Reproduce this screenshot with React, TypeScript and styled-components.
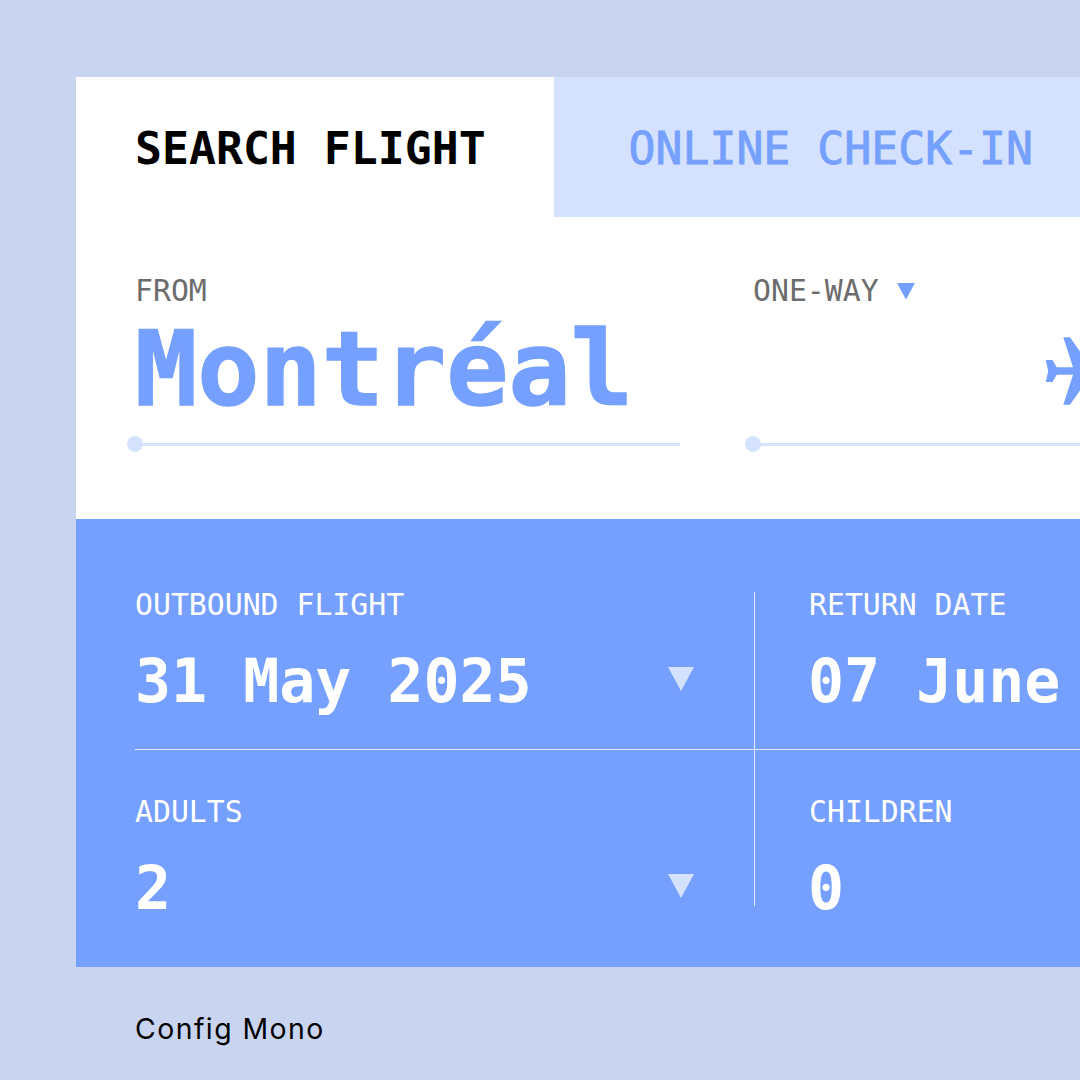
import React from "react";
import styled, { createGlobalStyle } from "styled-components";

const MONO = `"DejaVu Sans Mono", "Liberation Mono", monospace`;
const BLUE = "#76a0ff";
const PALE = "#d5e2ff";

const Global = createGlobalStyle`
  html, body { margin: 0; padding: 0; background: #c9d5f0; }
  #root { width: 1080px; height: 1080px; overflow: hidden; }
`;

const Page = styled.div`
  width: 1080px;
  height: 1080px;
  overflow: hidden;
  background: #c9d5f0;
  padding: 77px 0 0 76px;
  box-sizing: border-box;
`;
const Card = styled.div`
  width: 1004px;
  display: flex;
  flex-direction: column;
`;
const Tabs = styled.div`
  display: flex;
  height: 140px;
`;
const Tab = styled.div<{ $active?: boolean }>`
  width: ${(p) => (p.$active ? "478px" : "526px")};
  box-sizing: border-box;
  display: flex;
  align-items: center;
  padding: 3px 0 0 ${(p) => (p.$active ? "59px" : "74.5px")};
  background: ${(p) => (p.$active ? "#fff" : PALE)};
  color: ${(p) => (p.$active ? "#000" : BLUE)};
  font: ${(p) => (p.$active ? 700 : 400)} 44.8px/60px ${MONO};
  -webkit-text-stroke: ${(p) => (p.$active ? "0" : "0.9px")};
  white-space: nowrap;
`;
const Route = styled.div`
  height: 302px;
  background: #fff;
  box-sizing: border-box;
  padding: 56px 0 0 60px;
  display: flex;
  gap: 74px;
`;
const Field = styled.div<{ $wide?: boolean }>`
  width: ${(p) => (p.$wide ? "400px" : "544px")};
  flex: none;
`;
const SmallLabel = styled.div`
  display: flex;
  align-items: center;
  gap: 18px;
  margin-left: -1px;
  font: 400 29.8px/36px ${MONO};
  color: #6c6c6c;
  white-space: nowrap;
`;
const City = styled.div`
  height: 92px;
  margin: 14px 0 0 -1px;
  font: 700 103.4px/92px ${MONO};
  -webkit-text-stroke: 1.5px ${BLUE};
  color: ${BLUE};
  white-space: nowrap;
`;
const PlaneSlot = styled.div`
  height: 92px;
  margin-top: 14px;
  padding: 4px 0 0 291px;
  box-sizing: border-box;
  display: flex;
  align-items: center;
`;
const Track = styled.div`
  position: relative;
  margin-top: 28px;
  height: 3px;
  background: ${PALE};
  &::before {
    content: "";
    position: absolute;
    left: -9px;
    top: -7px;
    width: 16px;
    height: 16px;
    border-radius: 50%;
    background: ${PALE};
  }
`;
const Details = styled.div`
  height: 448px;
  background: ${BLUE};
  box-sizing: border-box;
  padding: 73px 0 0 59px;
  display: grid;
  grid-template-columns: 619px 1fr;
  grid-template-rows: 158px 156px;
`;
const Cell = styled.div<{ $right?: boolean; $top?: boolean }>`
  box-sizing: border-box;
  color: #fff;
  padding-left: ${(p) => (p.$right ? "54px" : "0")};
  padding-top: ${(p) => (p.$top ? "0" : "49px")};
  border-left: ${(p) => (p.$right ? "1px solid #e4ecff" : "none")};
  border-bottom: ${(p) => (p.$top ? "1px solid #e4ecff" : "none")};
`;
const CellLabel = styled.div`
  font: 400 29.8px/26px ${MONO};
  white-space: nowrap;
`;
const ValueRow = styled.div`
  display: flex;
  align-items: center;
  justify-content: space-between;
  margin-top: 45px;
  padding-right: 60px;
  height: 36px;
`;
const Value = styled.div<{ $inset?: boolean }>`
  font: 700 59.9px/36px ${MONO};
  margin-left: ${(p) => (p.$inset ? "-1px" : "0")};
  white-space: nowrap;
`;
const CaretIcon = styled.svg<{ $lift?: boolean }>`
  display: block;
  flex: none;
  margin-top: ${(p) => (p.$lift ? "-4px" : "0")};
`;
const PlaneIcon = styled.svg`
  display: block;
  flex: none;
`;
const Footer = styled.div`
  margin: 44px 0 0 59px;
  font: 400 28.4px/36px Inter, sans-serif;
  letter-spacing: 1.45px;
  color: #000;
`;

const Caret = ({ size, color, lift }: { size: number; color: string; lift?: boolean }) => (
  <CaretIcon $lift={lift} width={size} height={size * 0.92} viewBox="0 0 26 24">
    <path d="M0 0H26L13 24Z" fill={color} />
  </CaretIcon>
);

const Plane = () => (
  <PlaneIcon width="70" height="68" viewBox="0 0 70 68">
    <path
      d="M.7 23H7.6L11.7 30.3H28L18.3 .3H25L46 30.3H60C64 30.3 68 32 68 34C68 36 64 37.7 60 37.7H46L25 67.7H18.3L28 37.7H11.7L7.6 45H.7L3.2 34Z"
      fill={BLUE}
    />
  </PlaneIcon>
);

export default function App() {
  return (
    <Page>
      <Global />
      <Card>
        <Tabs>
          <Tab $active>SEARCH FLIGHT</Tab>
          <Tab>ONLINE CHECK-IN</Tab>
        </Tabs>
        <Route>
          <Field>
            <SmallLabel>FROM</SmallLabel>
            <City>Montréal</City>
            <Track />
          </Field>
          <Field $wide>
            <SmallLabel>
              ONE-WAY <Caret size={18} color={BLUE} />
            </SmallLabel>
            <PlaneSlot>
              <Plane />
            </PlaneSlot>
            <Track />
          </Field>
        </Route>
        <Details>
          <Cell $top>
            <CellLabel>OUTBOUND FLIGHT</CellLabel>
            <ValueRow>
              <Value>31 May 2025</Value>
              <Caret size={26} color={PALE} lift />
            </ValueRow>
          </Cell>
          <Cell $top $right>
            <CellLabel>RETURN DATE</CellLabel>
            <ValueRow>
              <Value $inset>07 June</Value>
            </ValueRow>
          </Cell>
          <Cell>
            <CellLabel>ADULTS</CellLabel>
            <ValueRow>
              <Value>2</Value>
              <Caret size={26} color={PALE} lift />
            </ValueRow>
          </Cell>
          <Cell $right>
            <CellLabel>CHILDREN</CellLabel>
            <ValueRow>
              <Value $inset>0</Value>
            </ValueRow>
          </Cell>
        </Details>
      </Card>
      <Footer>Config Mono</Footer>
    </Page>
  );
}
